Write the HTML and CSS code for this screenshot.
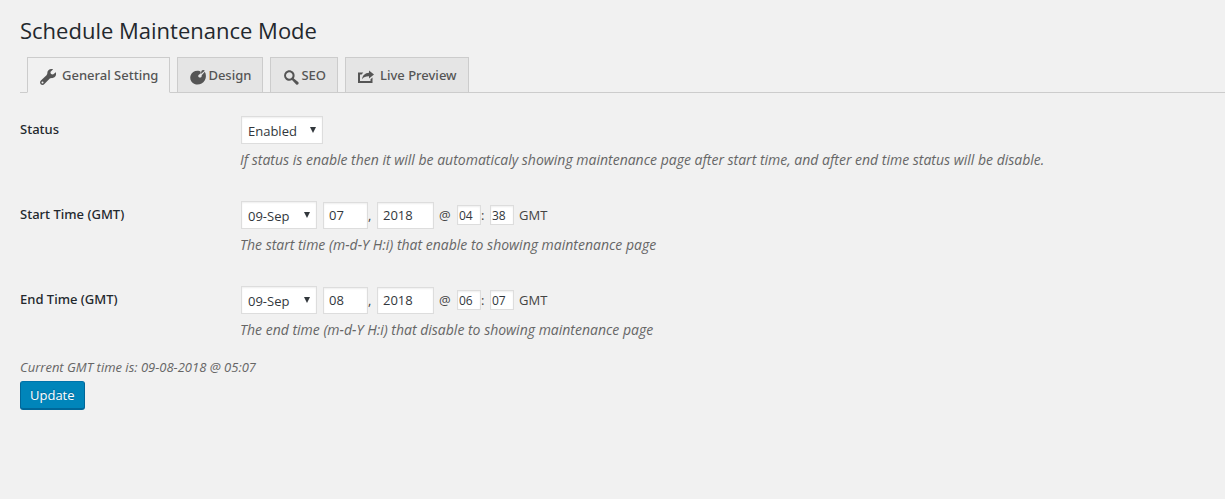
FILE: index.html
```html
<!DOCTYPE html>
<html lang="en">
<head>
<meta charset="utf-8">
<title>Schedule Maintenance Mode</title>
<link rel="stylesheet" href="styles.css">
</head>
<body>
<main class="wrap">
  <h1 class="title">Schedule Maintenance Mode</h1>
  <nav class="tabs">
    <a class="tab tab-active" href="#general">
      <svg class="icon" viewBox="0 0 16 16" aria-hidden="true"><path fill-rule="evenodd" d="M11.500 0C8.800 0 7 2 7.300 4.800L6.500 6.200.9 11.400c-1.100 1-1.100 2.700-.2 3.800 1 1 2.800 1 3.700-.1l5.400-5.500 1.500-.5c2.700.3 4.900-1.700 4.900-4.300 0-.6-.1-1.100-.3-1.500L13 5.600l-2.100-.5-.5-2.100L13.100.3C12.600.1 12 0 11.500 0zM2.500 12.500a1 1 0 1 1 0 2 1 1 0 0 1 0-2z"/></svg>
      <span>General Setting</span>
    </a>
    <a class="tab tab-tight" href="#design">
      <svg class="icon" viewBox="0 0 16 16" aria-hidden="true"><path d="M9.500 1.900C5.500.9 1.800 2.900.6 6.400c-1.200 3.600.5 7.200 4 8.600 3.700 1.400 8.100-.1 10.100-3.600 1.700-2.900 1.600-6.200.1-8.700l-3.100 3.600c.2 1.400-.7 2.300-1.800 2.300-1.300 0-2-1.100-1.600-2.200.2-.7.8-1 1.300-1.200.7-.3 1-.8 1.100-1.500.1-.9-.4-1.600-1.200-1.800zM10.800 5l4-3.200c-.7-1.100-2.200-1.200-3-.3-.7.800-.5 2.300-1 3.500z"/></svg>
      <span>Design</span>
    </a>
    <a class="tab tab-tight" href="#seo">
      <svg class="icon" viewBox="0 0 16 16" aria-hidden="true"><path fill-rule="evenodd" d="M10.800 9.400c1.300-2 1.100-4.800-.7-6.600-2.100-2.100-5.500-2.100-7.500 0s-2.100 5.300 0 7.400c1.700 1.800 4.400 2.100 6.400.8l4 4.200c.6.7 1.600.7 2.200.1s.6-1.600 0-2.200zM4 8.800C2.700 7.500 2.700 5.400 4 4.200s3.300-1.300 4.600 0 1.300 3.300 0 4.600-3.300 1.300-4.600 0z"/></svg>
      <span>SEO</span>
    </a>
    <a class="tab" href="#preview">
      <svg class="icon" viewBox="0 0 16 16" aria-hidden="true"><path d="M11 1.500l5 4-5 4V7.300C8 7.200 5.800 8 4 10.300 4.500 6.500 7 4 11 3.800zM0 3.500h5.300L3.600 5.500H2V12h10.500v-1.800l2-1.700V14H0z"/></svg>
      <span>Live Preview</span>
    </a>
  </nav>
  <form>
    <div class="row">
      <label class="label" for="status">Status</label>
      <div>
        <div class="fields">
          <span class="select-box"><select class="select select-status" id="status"><option>Enabled</option><option>Disabled</option></select></span>
        </div>
        <p class="note">If status is enable then it will be automaticaly showing maintenance page after start time, and after end time status will be disable.</p>
      </div>
    </div>
    <div class="row">
      <label class="label" for="start-month">Start Time (GMT)</label>
      <div>
        <div class="fields">
          <span class="select-box"><select class="select select-month" id="start-month"><option>09-Sep</option></select></span>
          <input class="input day" type="text" value="07" aria-label="Start day"><span class="comma">,</span>
          <input class="input year" type="text" value="2018" aria-label="Start year"><span class="at">@</span>
          <input class="input time" type="text" value="04" aria-label="Start hour"><span class="colon">:</span>
          <input class="input time" type="text" value="38" aria-label="Start minute"><span class="zone">GMT</span>
        </div>
        <p class="note">The start time (m-d-Y H:i) that enable to showing maintenance page</p>
      </div>
    </div>
    <div class="row">
      <label class="label" for="end-month">End Time (GMT)</label>
      <div>
        <div class="fields">
          <span class="select-box"><select class="select select-month" id="end-month"><option>09-Sep</option></select></span>
          <input class="input day" type="text" value="08" aria-label="End day"><span class="comma">,</span>
          <input class="input year" type="text" value="2018" aria-label="End year"><span class="at">@</span>
          <input class="input time" type="text" value="06" aria-label="End hour"><span class="colon">:</span>
          <input class="input time" type="text" value="07" aria-label="End minute"><span class="zone">GMT</span>
        </div>
        <p class="note">The end time (m-d-Y H:i) that disable to showing maintenance page</p>
      </div>
    </div>
    <p class="note now">Current GMT time is: 09-08-2018 @ 05:07</p>
    <button class="button" type="submit">Update</button>
  </form>
</main>
</body>
</html>
```
FILE: styles.css
```css
* {
  box-sizing: border-box;
}

body {
  margin: 0;
  background: #f1f1f1;
  color: #444;
  font: 13px/20px "Open Sans", "Noto Sans", sans-serif;
}

.wrap {
  padding: 15px 0 24px 20px;
}

.title {
  margin: 0 0 12px;
  color: #23282d;
  font-size: 22px;
  font-weight: 400;
  line-height: 30px;
}

.tabs {
  display: flex;
  gap: 7px;
  padding-left: 7px;
  border-bottom: 1px solid #ccc;
}

.tab {
  display: flex;
  align-items: center;
  gap: 6px;
  height: 36px;
  margin-bottom: -1px;
  padding: 0 11px 0 12px;
  border: 1px solid #ccc;
  background: #e5e5e5;
  color: #555;
  font-family: "Noto Sans", sans-serif;
  font-weight: 500;
  text-decoration: none;
}

.tab-active {
  border-bottom-color: #f1f1f1;
  background: #f1f1f1;
}

.tab-tight {
  gap: 2px;
}

.icon {
  width: 16px;
  height: 16px;
  margin-top: 3px;
  fill: #555;
}

.row {
  display: grid;
  grid-template-columns: 220px 1fr;
  padding-top: 23px;
  padding-bottom: 8px;
}

.label {
  padding-top: 3px;
  color: #23282d;
  font-family: "Noto Sans", sans-serif;
  font-weight: 500;
}

.fields {
  display: flex;
  align-items: center;
  padding-left: 1px;
}

.select-box {
  position: relative;
}

.select-box::after {
  position: absolute;
  top: 11px;
  right: 7px;
  border: 3px solid transparent;
  border-top: 6px solid #32373c;
  border-bottom: 0;
  content: "";
  pointer-events: none;
}

.select,
.input {
  margin: 0;
  border: 1px solid #ddd;
  border-radius: 0;
  background: #fff;
  box-shadow: inset 0 1px 2px rgba(0, 0, 0, 0.07);
  color: #32373c;
  font: inherit;
}

.select {
  display: block;
  height: 28px;
  padding: 1px 6px 0;
  appearance: none;
}

.select-status {
  width: 82px;
}

.select-month {
  width: 76px;
}

.input {
  height: 27px;
  padding: 0 5px;
}

.day {
  width: 45px;
  margin-left: 6px;
}

.year {
  width: 57px;
}

.time {
  width: 24px;
  height: 20px;
  padding: 1px 1px 0;
  font-size: 12px;
}

.comma,
.colon {
  width: 9px;
}

.at {
  width: 23px;
  padding-left: 5px;
}

.zone {
  padding-left: 5px;
}

.note {
  margin: 6px 0 0;
  color: #666;
  font-size: 14px;
  font-style: italic;
}

.now {
  margin-top: 9px;
  font-size: 13px;
}

.button {
  display: block;
  height: 29px;
  margin-top: 4px;
  padding: 0 9px;
  border: 1px solid #006799;
  border-top-color: #0073aa;
  border-bottom-width: 2px;
  border-radius: 3px;
  background: #0085ba;
  color: #fff;
  font: inherit;
  text-shadow: 0 -1px 1px #006799;
}
```
